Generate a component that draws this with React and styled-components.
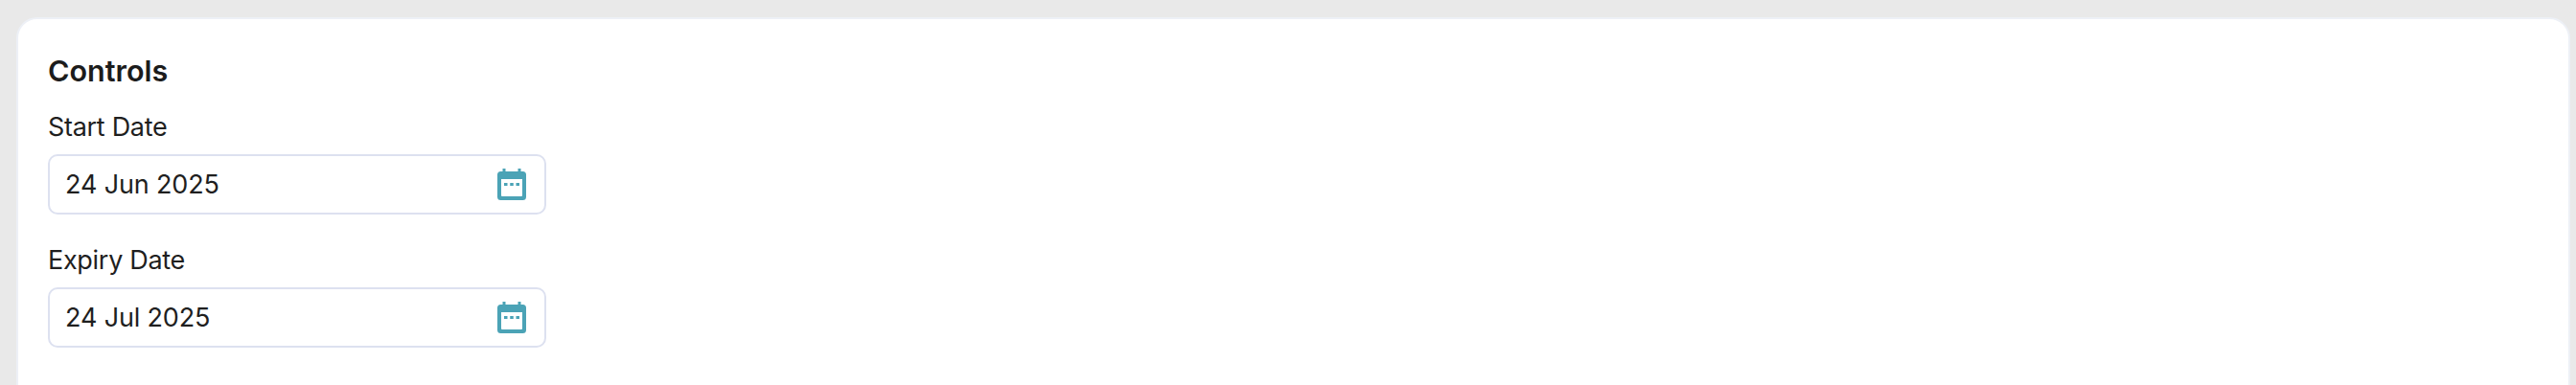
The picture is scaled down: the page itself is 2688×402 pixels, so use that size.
import React from "react"
import styled, { createGlobalStyle } from "styled-components"

const GlobalStyle = createGlobalStyle`
  html, body {
    margin: 0;
    height: 402px;
    overflow: hidden;
    background: #e9e9e9;
    font-family: "Inter", "Liberation Sans", sans-serif;
  }
`

const Page = styled.div`
  height: 402px;
  box-sizing: border-box;
  padding: 18px 6px 0 17px;
  overflow: hidden;
`

const Card = styled.section`
  height: 420px;
  box-sizing: border-box;
  background: #fff;
  border: 2px solid #edf0f6;
  border-radius: 22px;
  padding: 35px 31px;
`

const Title = styled.h2`
  margin: 0 0 23px;
  font-size: 30.5px;
  line-height: 38px;
  font-weight: 600;
  color: #1c1c1c;
`

const Field = styled.div`
  width: 520px;
  margin-bottom: 31px;
`

const Label = styled.label`
  display: block;
  margin-bottom: 11px;
  font-size: 27px;
  line-height: 34px;
  letter-spacing: -0.3px;
  color: #1f1f1f;
`

const DateBox = styled.div`
  height: 63px;
  box-sizing: border-box;
  display: flex;
  align-items: center;
  justify-content: space-between;
  padding: 0 19px 0 16px;
  border: 2px solid #dde1f0;
  border-radius: 10px;
  font-size: 27px;
  letter-spacing: -0.15px;
  color: #1f1f1f;
`

const CalendarIcon = () => (
  <svg width="30" height="33" viewBox="0 0 30 33" aria-hidden="true">
    <path
      fill="#4ba3b6"
      fillRule="evenodd"
      d="M5.500 0h3v3h13V0h3v3h2A3.500 3.500 0 0 1 30 6.500v23a3.500 3.500 0 0 1-3.500 3.500h-23A3.500 3.500 0 0 1 0 29.500v-23A3.500 3.500 0 0 1 3.500 3h2V0zM4 11v17a1 1 0 0 0 1 1h20a1 1 0 0 0 1-1V11H4z"
    />
    <rect x="7" y="15" width="3.500" height="3" fill="#4ba3b6" />
    <rect x="13.250" y="15" width="3.500" height="3" fill="#4ba3b6" />
    <rect x="19.500" y="15" width="3.500" height="3" fill="#4ba3b6" />
  </svg>
)

const DateField = ({ label, value }) => (
  <Field>
    <Label>{label}</Label>
    <DateBox>
      <span>{value}</span>
      <CalendarIcon />
    </DateBox>
  </Field>
)

export default function App() {
  return (
    <Page>
      <GlobalStyle />
      <Card>
        <Title>Controls</Title>
        <DateField label="Start Date" value="24 Jun 2025" />
        <DateField label="Expiry Date" value="24 Jul 2025" />
      </Card>
    </Page>
  )
}
